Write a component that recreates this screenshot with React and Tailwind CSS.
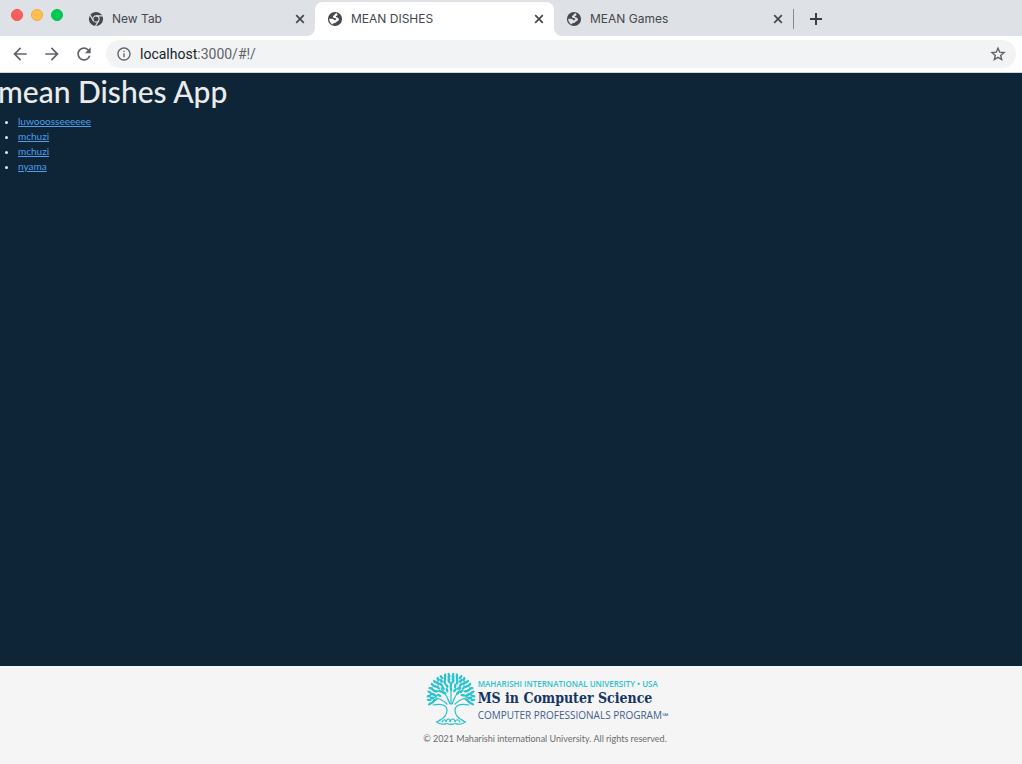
import React from "react";
import { MdArrowBack, MdArrowForward, MdInfoOutline, MdRefresh } from "react-icons/md";

const dishes = ["luwooosseeeeee", "mchuzi", "mchuzi", "nyama"];

function Corner({ side }) {
  return (
    <svg
      viewBox="0 0 8 8"
      aria-hidden="true"
      className={
        side === "left"
          ? "absolute bottom-0 -left-2 size-2 fill-white"
          : "absolute -right-2 bottom-0 size-2 fill-white"
      }
    >
      <path d={side === "left" ? "M8 0V8H0A8 8 0 0 0 8 0Z" : "M0 0V8H8A8 8 0 0 1 0 0Z"} />
    </svg>
  );
}

function ChromeIcon() {
  return (
    <svg viewBox="0 0 16 16" aria-hidden="true" className="size-4">
      <circle cx="8" cy="8" r="7.1" fill="#45484c" />
      <circle cx="8" cy="8" r="3.1" fill="none" stroke="#dee1e6" strokeWidth="1.1" />
      <path d="M8 4.9H14.4M5.3 9.6L2.1 4.1M10.7 9.6L7.5 15" fill="none" stroke="#dee1e6" strokeWidth="1.1" />
    </svg>
  );
}

function GlobeIcon({ active }) {
  return (
    <svg viewBox="0 0 16 16" aria-hidden="true" className="size-4">
      <circle cx="8" cy="8" r="7.1" fill="#45484c" />
      <path
        d="M9.4 2.2C8.2 2.4 7.6 3.2 7.4 4.2C6.2 4.4 5.6 5.2 6 6.2C6.4 7.2 8.2 6.8 9 7.6C9.6 8.2 9 9 8.2 9.2C7 9.4 7.2 8.2 5.8 7.9C4.6 7.6 3.4 7.9 2.2 7.7C2.2 10.4 3.6 12.4 5.6 13.4C6 12.4 6.4 12 7.6 11.9C9.2 11.8 9.2 10.8 10.4 10.3C11.8 9.7 12.3 8.6 11.6 7.4C11 6.3 9.2 6.6 8.8 5.8C8.5 5.1 9.6 4.9 10.2 4.4C10.8 3.8 10.6 2.8 9.4 2.2Z"
        fill={active ? "#ffffff" : "#dee1e6"}
      />
    </svg>
  );
}

function CloseIcon() {
  return (
    <svg viewBox="0 0 16 16" aria-hidden="true" className="size-4">
      <path d="M4.2 4.2L11.8 11.8M11.8 4.2L4.2 11.8" fill="none" stroke="#45484c" strokeWidth="1.7" />
    </svg>
  );
}

function PlusIcon() {
  return (
    <svg viewBox="0 0 20 20" aria-hidden="true" className="size-5">
      <path d="M10 4V16M4 10H16" fill="none" stroke="#3a3d41" strokeWidth="2" />
    </svg>
  );
}

function StarIcon() {
  return (
    <svg viewBox="0 0 16 16" aria-hidden="true" className="size-4">
      <path
        d="M8 2.2L9.7 6.2L14 6.6L10.7 9.4L11.7 13.6L8 11.4L4.3 13.6L5.3 9.4L2 6.6L6.3 6.2Z"
        fill="none"
        stroke="#5f6368"
        strokeWidth="1.4"
      />
    </svg>
  );
}

function Tab({ title, icon, active }) {
  return (
    <div
      className={
        active
          ? "relative flex w-[239px] items-center rounded-t-lg bg-white pr-[7px] pl-3"
          : "flex w-[239px] items-center pr-[7px] pl-3"
      }
    >
      {active && <Corner side="left" />}
      {active && <Corner side="right" />}
      {icon}
      <span className="ml-2 flex-1 truncate font-[Inter,sans-serif] text-xs">{title}</span>
      <button type="button" aria-label={`Close ${title}`}>
        <CloseIcon />
      </button>
    </div>
  );
}

/* Leaves fan out over the crown in rings around the top of the trunk. */
const rings = [
  { r: 8, n: 5, from: -150, to: -30 },
  { r: 12, n: 9, from: -172, to: -8 },
  { r: 16, n: 14, from: -190, to: 10 },
  { r: 19, n: 18, from: -196, to: 16 },
  { r: 22, n: 22, from: -198, to: 18 },
];
const leaves = rings.flatMap(({ r, n, from, to }) =>
  Array.from({ length: n }, (_, i) => {
    const angle = from + ((to - from) * i) / (n - 1);
    const rad = (angle * Math.PI) / 180;
    return { x: 25 + r * Math.cos(rad), y: 25 + r * Math.sin(rad), angle };
  })
);

function Tree() {
  return (
    <svg viewBox="0 0 50 54" aria-hidden="true" className="h-[54px] w-[50px]">
      <g fill="#2cc3cd">
        {leaves.map(({ x, y, angle }, i) => (
          <ellipse key={i} cx={x} cy={y} rx="2.5" ry="1.25" transform={`rotate(${angle + (i % 2 ? 14 : -14)} ${x} ${y})`} />
        ))}
      </g>
      <g fill="none" stroke="#2cc3cd" strokeLinecap="round" strokeWidth="1.2">
        <path d="M14 48C20 45 21 42 21 38C21 34 17 31 7 33" />
        <path d="M36 48C30 45 29 42 29 38C29 34 33 31 43 33" />
        <path d="M25 32V10M24 32C22 26 19 21 15 16M26 32C28 26 31 21 35 16" />
        <path d="M21 32C17 28 12 26 6 25M29 32C33 28 38 26 44 25" />
        <path d="M14 48C13 49 12 50 10 50C13 51 15 53 19 52M36 48C37 49 38 50 40 50C37 51 35 53 31 52" />
        <path d="M16 50C17 47 20 47 20 50C21 46 24 46 24 50C25 46 29 46 29 50C30 47 33 47 34 50M19 52C22 50 23 54 25 52C27 54 28 50 31 52" />
      </g>
    </svg>
  );
}

export default function App() {
  return (
    <div className="flex min-h-screen flex-col bg-[#0e2538] font-[Roboto,sans-serif] text-[#45484c]">
      <header className="border-b border-[#d5d7da] bg-white">
        <div className="flex h-9 bg-[#dee1e6]">
          <div className="flex w-[76px] shrink-0 gap-2 pt-[9px] pl-[11px]">
            <button type="button" aria-label="Close window" className="size-3 rounded-full border border-[#f0504b] bg-[#ff5f5a]" />
            <button type="button" aria-label="Minimize window" className="size-3 rounded-full border border-[#eeaa42] bg-[#ffbe50]" />
            <button type="button" aria-label="Zoom window" className="size-3 rounded-full border border-[#00bb4b] bg-[#00ca56]" />
          </div>
          <nav aria-label="Browser tabs" className="flex pt-[2px]">
            <Tab title="New Tab" icon={<ChromeIcon />} />
            <Tab title="MEAN DISHES" active icon={<GlobeIcon active />} />
            <Tab title="MEAN Games" icon={<GlobeIcon />} />
          </nav>
          <div className="flex items-center pt-[2px]">
            <span className="h-5 w-px bg-[#85888d]" />
            <button type="button" aria-label="New tab" className="ml-3">
              <PlusIcon />
            </button>
          </div>
        </div>
        <div className="flex h-9 items-center pr-[6px] pl-[10px] text-[#5f6368]">
          <div className="flex w-24 gap-3">
            <button type="button" aria-label="Back"><MdArrowBack className="size-5" /></button>
            <button type="button" aria-label="Forward"><MdArrowForward className="size-5" /></button>
            <button type="button" aria-label="Reload"><MdRefresh className="size-5" /></button>
          </div>
          <div className="flex h-7 flex-1 items-center rounded-full bg-[#f1f3f4] px-[10px]">
            <MdInfoOutline className="size-4" />
            <p className="ml-2 flex-1 text-sm">
              <span className="text-[#202124]">localhost</span>:3000/#!/
            </p>
            <button type="button" aria-label="Bookmark this page">
              <StarIcon />
            </button>
          </div>
        </div>
      </header>

      <main className="flex-1 font-[Lato,sans-serif] text-[#ebebeb]">
        <h1 className="-ml-[2px] text-[30px] leading-9 font-medium">mean Dishes App</h1>
        <ul className="mt-[5px] list-disc pl-[18px] text-[10px] leading-[15px]">
          {dishes.map((dish, i) => (
            <li key={i}>
              <a href="#!/" className="text-[#4c9fe8] underline">{dish}</a>
            </li>
          ))}
        </ul>
      </main>

      <footer className="flex h-[98px] flex-col items-center bg-[#f5f5f5] pt-[6px] pl-[68px] font-[Lato,sans-serif]">
        <div className="flex items-start gap-[2px] pl-1">
          <Tree />
          <div className="pt-[6px] whitespace-nowrap">
            <p className="font-['Open_Sans',sans-serif] text-[8px] leading-3 font-semibold text-[#2cc3cd]">
              MAHARISHI INTERNATIONAL UNIVERSITY • USA
            </p>
            <p className="font-['DejaVu_Serif_Condensed','DejaVu_Serif',serif] text-[14px] leading-[17px] font-bold text-[#173563]">
              MS in Computer Science
            </p>
            <p className="font-['Open_Sans',sans-serif] text-[10px] leading-4 text-[#435f8c]">
              COMPUTER PROFESSIONALS PROGRAM<span className="text-[8px]">℠</span>
            </p>
          </div>
        </div>
        <p className="mt-[7px] text-[9px] leading-3 text-[#6c6c6c]">
          © 2021 Maharishi international University. All rights reserved.
        </p>
      </footer>
    </div>
  );
}
